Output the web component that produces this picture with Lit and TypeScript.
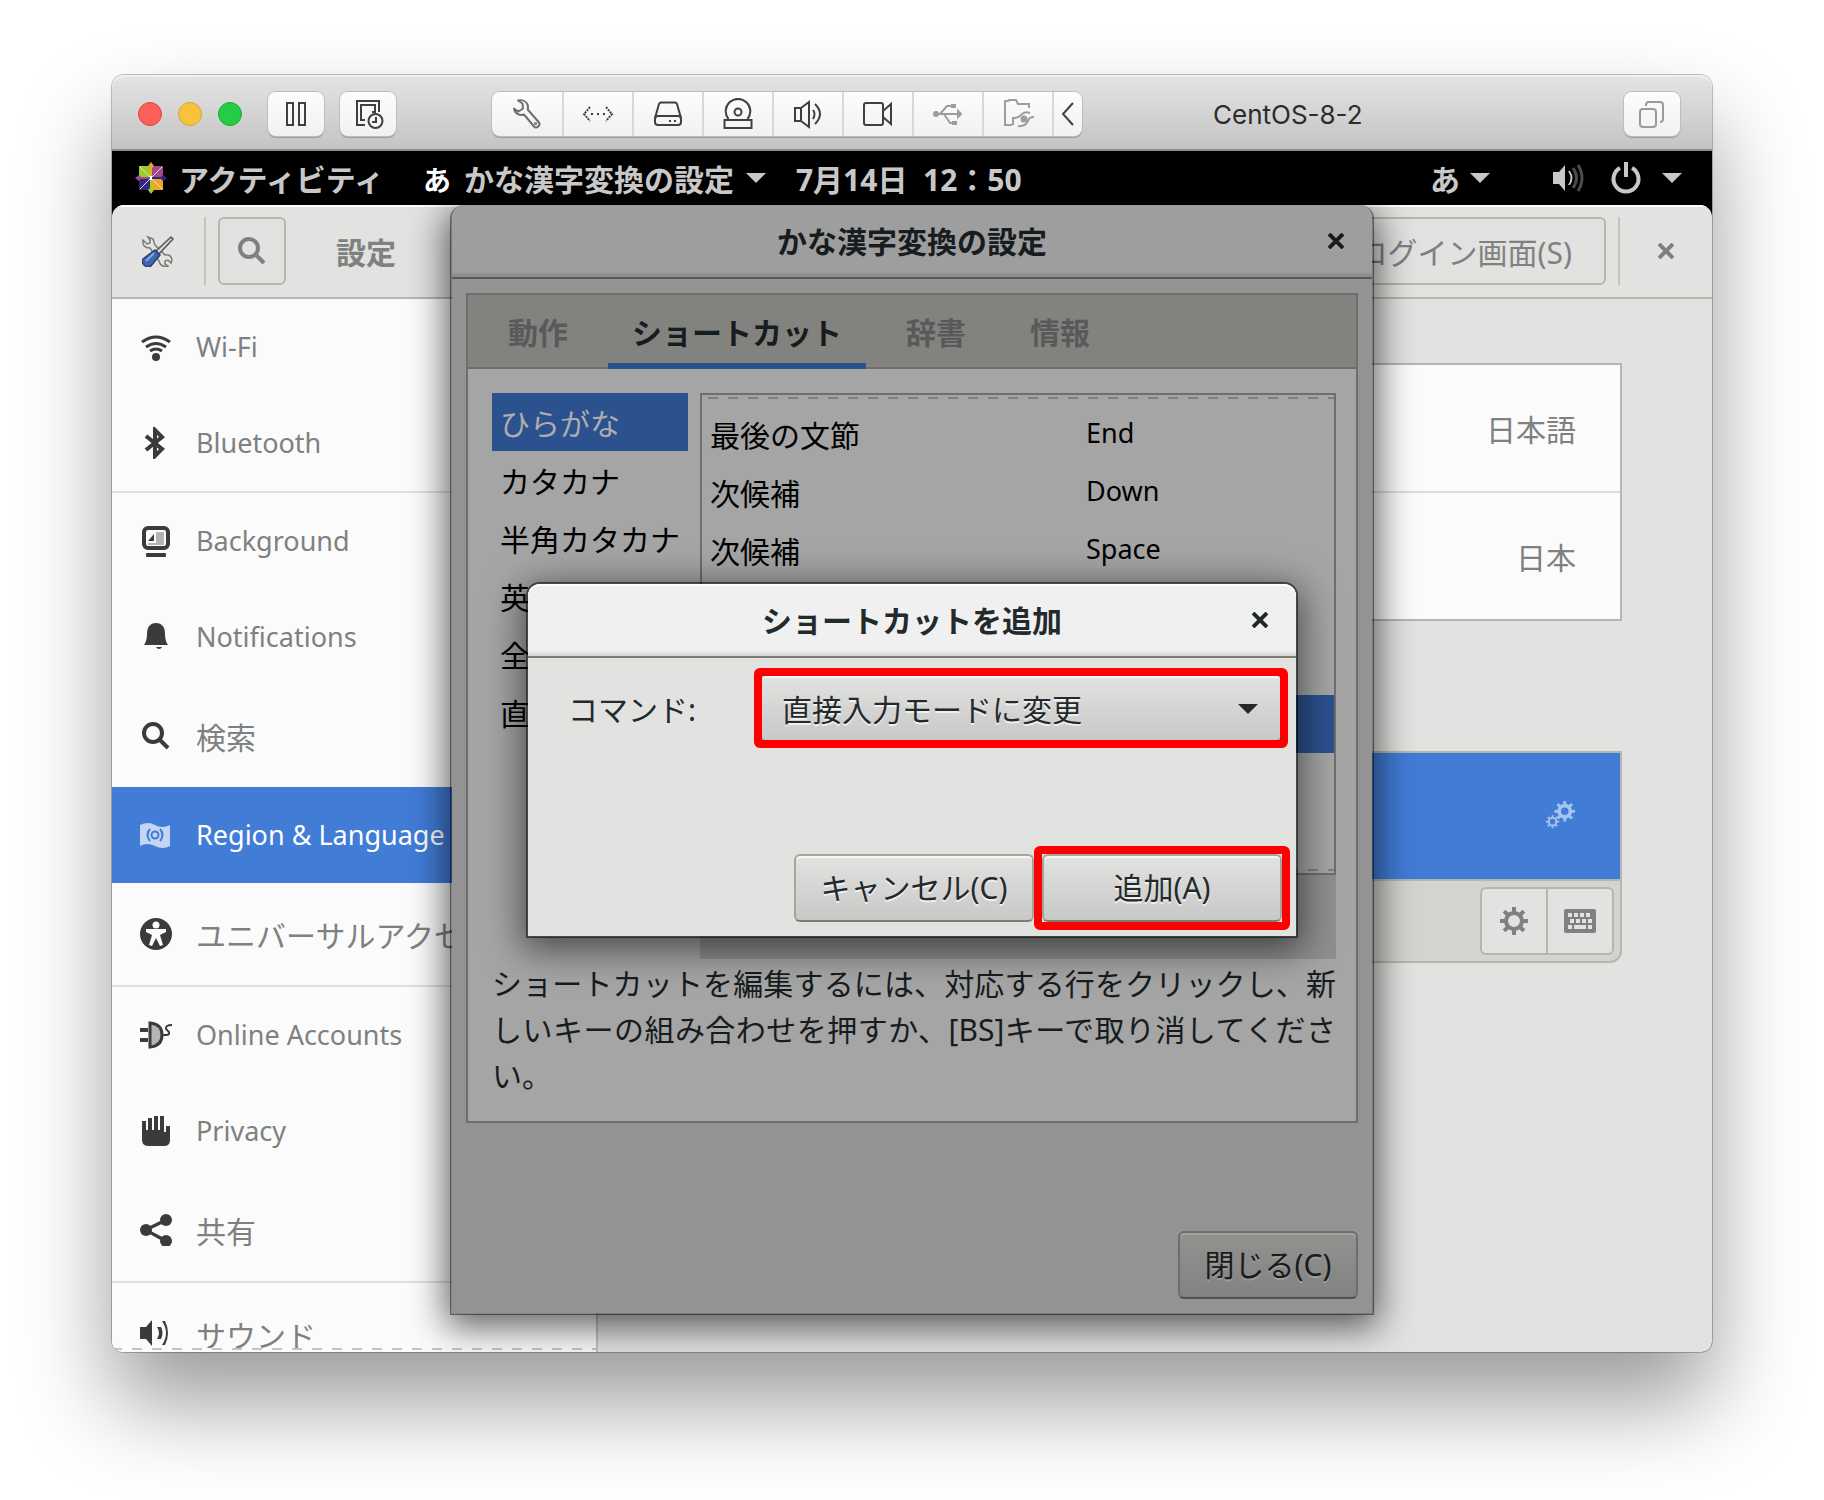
import { LitElement, html, svg, css, nothing, TemplateResult } from "lit";
import { customElement, state } from "lit/decorators.js";
import { classMap } from "lit/directives/class-map.js";

/* Toolbar glyphs of the virtual machine window, on a 32-unit grid. */
const line = (body: unknown, w = 2) =>
  html`<svg class="glyph" viewBox="0 0 32 32" fill="none" stroke="currentColor" stroke-width=${w} aria-hidden="true">${body}</svg>`;
const solid = (body: unknown) =>
  html`<svg class="glyph" viewBox="0 0 32 32" fill="currentColor" aria-hidden="true">${body}</svg>`;

const vm = {
  pause: line(svg`<rect x="7" y="5" width="6" height="22"/><rect x="19" y="5" width="6" height="22"/>`),
  snapshot: line(svg`<path d="M13 27H5V3h22v11M13 22H9V7h14v7h-3"/><circle cx="23.500" cy="23" r="7"/><path d="M24 19v5h-4"/>`),
  wrench: line(svg`<path stroke-linejoin="round" d="M7 2.500c4-1 8 .5 9.500 4 .8 1.800.6 3.500.2 5L28 24.500c2 2.800-2.500 6.500-5 4L13 16.500c-4 1.500-9-.5-10-6l4.500 3 4.500-3-.5-5z"/><circle cx="24.500" cy="25.500" r=".6"/>`),
  network: line(svg`<path stroke-dasharray="2 1" d="M8 9l-6 7 6 7M24 9l6 7-6 7"/><path stroke-dasharray="2 4" d="M9 16h15"/>`),
  disk: line(svg`<path stroke-linejoin="round" d="M3 20L7 6q.6-1.500 2-1.500h14q1.400 0 2 1.500l4 14"/><rect x="3" y="18" width="26" height="9" rx="3"/><path d="M17 23h2M22 23h2"/>`),
  optical: line(svg`<path d="M6.500 21A12.300 12.300 0 1 1 25.500 21"/><circle cx="16" cy="14" r="3.500"/><rect x="2.500" y="22" width="27" height="8"/>`),
  sound: line(svg`<path d="M3 10h6v13H3zM9 10l8-6v25l-8-6M21 12q3 4 0 9M23 6q10 10 0 20"/>`),
  video: line(svg`<rect x="2" y="5" width="19" height="22" rx="2"/><path d="M21 13l8-7v20l-8-7"/>`),
  usb: line(svg`<path d="M2 16h26M8 16l7-8h6M12 16l6 9h4"/><circle cx="4" cy="16" r="2" fill="currentColor"/><path d="M26 13l3 3-3 3zM20 7h3v2h-3zM21 24h3v2h-3z" fill="currentColor"/>`),
  shared: line(svg`<path d="M10 27H3V3h3l1-1h7l2 4h11v4M11 27V20q5 0 8-3 4-4 9-2M32 19q-5 0-6 4-3 6-10 5"/><circle cx="22" cy="21" r="2.500" fill="currentColor"/>`),
  windows: line(svg`<rect x="4" y="11" width="16" height="18" rx="3"/><path d="M10 8V7q0-3 3-3h11q3 0 3 3v14q0 3-3 3"/>`),
};

const side = {
  wifi: line(svg`<path d="M2 11q14-10 28 0M6 16q10-7 20 0M10 20q6-4 12 0" stroke-width="3"/><circle cx="16" cy="26" r="4" fill="currentColor" stroke="none"/>`),
  bluetooth: line(svg`<path d="M6 9l16 13-7 7V3l7 7L6 23" stroke-width="4"/>`),
  background: html`<svg class="glyph" viewBox="0 0 32 32" aria-hidden="true"><rect x="4" y="3" width="24" height="20" rx="4" fill="none" stroke="currentColor" stroke-width="4"/><rect x="16" y="7" width="8" height="12" fill="#b4b4b4"/><path d="M8 16l6-7v7z" fill="currentColor"/><path d="M8 19h16" stroke="#b4b4b4" stroke-width="2"/><rect x="6" y="28" width="20" height="4" rx="1" fill="currentColor"/></svg>`,
  bell: solid(svg`<path d="M16 2c6 0 9 4 9 11q0 7 3 11H4q3-4 3-11c0-7 3-11 9-11zM16 26h6q-1 2-3 2t-3-2z"/>`),
  search: line(svg`<circle cx="13" cy="13" r="9"/><path d="M19 19l9 9"/>`, 4),
  flag: html`<svg class="glyph" viewBox="0 0 32 32" aria-hidden="true"><path d="M0 6q8-4 15 0t15 0v21q-7 4-15 0t-15 0z" fill="currentColor" opacity=".68"/><g fill="none" stroke="#417cd7" stroke-width="2"><circle cx="15" cy="16" r="3.500"/><path d="M10 10q-5 6 0 12M20 10q5 6 0 12"/></g></svg>`,
  access: html`<svg class="glyph" viewBox="0 0 32 32" aria-hidden="true"><circle cx="16" cy="16" r="16" fill="currentColor"/><circle cx="16" cy="7" r="3.500" fill="#fbfbfb"/><path d="M6 11h20v3l-6 3 3 10-3 1-4-8-4 8-3-1 3-10-6-3z" fill="#fbfbfb"/></svg>`,
  accounts: html`<svg class="glyph" viewBox="0 0 32 32" aria-hidden="true"><path d="M10 4q12 1 12 12t-12 12z" fill="#b4b4b4" stroke="currentColor" stroke-width="3"/><path d="M0 11h8M0 21h8" stroke="currentColor" stroke-width="4"/><path d="M22 16h4q4 0 3-3l-3-3q-1-4 6-4" fill="none" stroke="currentColor" stroke-width="2"/></svg>`,
  hand: solid(svg`<path d="M2 6h4v9h2V3h4v12h2V1h4v14h2V1h4v16h2v-6h4v14q0 6-6 6H9q-7 0-7-6z"/>`),
  share: solid(svg`<circle cx="6" cy="16" r="6"/><circle cx="26" cy="6" r="6"/><circle cx="26" cy="27" r="6"/><path d="M6 14L26 4v4L9 16l17 9v4L6 18z"/>`),
  sound: solid(svg`<path d="M0 9h6l6-7v26l-6-7H0zM17 9q4 6 0 12h4q3-6 0-12zM22 3q8 12 0 24h3q6-12 0-24z"/>`),
};

const gearTeeth = (cx: number, cy: number, r: number, w: number) =>
  svg`${[0, 45, 90, 135, 180, 225, 270, 315].map(
    (a) => svg`<rect x=${cx - w / 2} y=${cy - r} width=${w} height=${w * 1.3} transform="rotate(${a} ${cx} ${cy})"/>`)}`;

const gear = html`<svg class="glyph" viewBox="0 0 32 32" fill="currentColor" aria-hidden="true"><circle cx="16" cy="16" r="8" fill="none" stroke="currentColor" stroke-width="4"/>${gearTeeth(16, 16, 14, 4)}</svg>`;
const gears = html`<svg class="glyph" viewBox="0 0 32 32" fill="currentColor" aria-hidden="true"><circle cx="20" cy="11" r="6" fill="none" stroke="currentColor" stroke-width="4"/>${gearTeeth(20, 11, 11, 3)}<circle cx="7" cy="22" r="4" fill="none" stroke="currentColor" stroke-width="2"/>${gearTeeth(7, 22, 7, 2)}</svg>`;
const keyboard = html`<svg class="glyph" viewBox="0 0 32 32" aria-hidden="true"><rect x="0" y="4" width="32" height="24" rx="2" fill="currentColor"/><path d="M4 10h4M10 10h4M16 10h4M22 10h4M6 16h4M12 16h4M18 16h4M24 16h4M4 22h4M10 22h12M24 22h4" stroke="#e2e2e0" stroke-width="4"/></svg>`;
const cross = html`<svg class="cross" viewBox="0 0 16 16" stroke="currentColor" stroke-width="4" aria-hidden="true"><path d="M1 1l14 14M15 1L1 15"/></svg>`;
const caret = html`<svg class="caret" viewBox="0 0 20 10" fill="currentColor" aria-hidden="true"><path d="M0 0h20L10 10z"/></svg>`;
const chevron = html`<svg class="chevron" viewBox="0 0 14 28" fill="none" stroke="currentColor" stroke-width="2" aria-hidden="true"><path d="M12 3L2 14l10 11"/></svg>`;

const centos = html`<svg class="glyph" viewBox="0 0 32 32" aria-hidden="true">
  <rect x="4" y="4" width="11" height="11" fill="#9ccd2a"/><rect x="17" y="4" width="11" height="11" fill="#a3478f"/>
  <rect x="4" y="17" width="11" height="11" fill="#2f2780"/><rect x="17" y="17" width="11" height="11" fill="#efa724"/>
  <path d="M5 5l22 22M27 5L5 27" stroke="#ddd" stroke-width="1"/>
  <path d="M16 0l3 4-2 2v9h-2V6l-2-2z" fill="#efa724"/><path d="M32 16l-4 3-2-2h-9v-2h9l2-2z" fill="#2f2780"/>
  <path d="M16 32l-3-4 2-2v-9h2v9l2 2z" fill="#9ccd2a"/><path d="M0 16l4-3 2 2h9v2H6l-2 2z" fill="#a3478f"/>
  <path d="M15 14h2v4h-2z" fill="#fff"/></svg>`;

const tools = html`<svg class="glyph" viewBox="0 0 32 32" aria-hidden="true">
  <path d="M6 2l5 2 2 6 10 10q6-1 7 5l-1 3-3-3-3 1v3l3 2q-7 2-9-5L8 13Q0 13 1 5l4 4 3-1V5z" fill="#e4e4e0" stroke="#777a76" stroke-width="1.500"/>
  <path d="M29 2l2 2-14 15-3-3z" fill="#d4d4d0" stroke="#55585a" stroke-width="1.500"/>
  <path d="M13 15l5 5-9 11q-4 2-7-1t-1-6z" fill="#3f68b0" stroke="#243f7c" stroke-width="1.500"/><path d="M12 18l-8 8" stroke="#86a6dc" stroke-width="2"/></svg>`;

interface Panel { icon: TemplateResult; label: string; tall?: boolean; rule?: boolean; }

const panels: Panel[] = [
  { icon: side.wifi, label: "Wi-Fi" },
  { icon: side.bluetooth, label: "Bluetooth", rule: true },
  { icon: side.background, label: "Background" },
  { icon: side.bell, label: "Notifications" },
  { icon: side.search, label: "検索", tall: true },
  { icon: side.flag, label: "Region & Language" },
  { icon: side.access, label: "ユニバーサルアクセス", tall: true, rule: true },
  { icon: side.accounts, label: "Online Accounts" },
  { icon: side.hand, label: "Privacy" },
  { icon: side.share, label: "共有", tall: true, rule: true },
  { icon: side.sound, label: "サウンド", tall: true },
];

const base = css`
  * { box-sizing: border-box; }
  button, select { font: inherit; color: inherit; margin: 0; padding: 0; border: 0; background: none; }
  a { color: inherit; text-decoration: none; }
  h1, h2, p, ul, dl, dd { margin: 0; padding: 0; font: inherit; }
  ul { list-style: none; }
  svg { display: block; flex: none; }
  .glyph { width: 32px; height: 32px; }
  .cross { width: 16px; height: 16px; }
  .caret { width: 20px; height: 10px; }
`;

@customElement("vm-titlebar")
export class VmTitlebar extends LitElement {
  static styles = [base, css`
    :host { box-sizing: border-box; display: flex; align-items: center; height: 76px; padding: 4px 32px 0 26px;
      background: linear-gradient(#e4e4e4, #c4c4c4); border-bottom: 2px solid #8c8c8c;
      box-shadow: inset 0 2px 0 #f0f0f0; color: #404040; }
    .lights { display: flex; gap: 16px; margin-right: 26px; }
    .light { width: 24px; height: 24px; border-radius: 50%; border: 1px solid #e0443e; background: #fc605b; }
    .light.min { background: #f7c33c; border-color: #dea334; }
    .light.max { background: #25cc46; border-color: #1dad2b; }
    .tool { display: flex; align-items: center; justify-content: center; width: 56px; height: 44px;
      border-radius: 8px; background: linear-gradient(#fdfdfd, #f1f1f1);
      box-shadow: 0 0 0 1px #bdbdbd, 0 2px 1px #999; }
    .pair { display: flex; gap: 16px; margin-right: 96px; }
    .group { display: flex; height: 44px; border-radius: 8px; background: linear-gradient(#fdfdfd, #f1f1f1);
      box-shadow: 0 0 0 1px #bdbdbd, 0 2px 1px #999; }
    .seg { display: flex; align-items: center; justify-content: center; width: 70px; border-right: 2px solid #d8d8d8; }
    .seg:first-child { width: 72px; }
    .seg.dim { color: #9d9d9d; }
    .seg.mid { color: #6e6e6e; }
    .seg.last { width: 28px; border: 0; }
    .chevron { width: 14px; height: 28px; }
    .name { margin-left: 131px; padding-top: 2px; font: 26px/32px Inter, Roboto, sans-serif; color: #2c2c2c; white-space: nowrap; }
    .end { margin-left: auto; color: #9a9a9a; }
  `];
  render() {
    const segs: [string, TemplateResult, string][] = [
      ["設定", vm.wrench, "mid"], ["ネットワーク", vm.network, ""], ["ハードディスク", vm.disk, ""], ["光学ドライブ", vm.optical, ""],
      ["サウンド", vm.sound, ""], ["カメラ", vm.video, ""], ["USB", vm.usb, "dim"], ["共有フォルダ", vm.shared, "dim"],
    ];
    return html`
      <div class="lights">
        <button class="light" aria-label="閉じる"></button>
        <button class="light min" aria-label="しまう"></button>
        <button class="light max" aria-label="拡大"></button>
      </div>
      <div class="pair">
        <button class="tool" aria-label="一時停止">${vm.pause}</button>
        <button class="tool" aria-label="スナップショット">${vm.snapshot}</button>
      </div>
      <div class="group">
        ${segs.map(([label, icon, tone]) => html`<button class="seg ${tone}" aria-label=${label}>${icon}</button>`)}
        <button class="seg last" aria-label="戻る">${chevron}</button>
      </div>
      <h1 class="name">CentOS-8-2</h1>
      <button class="tool end" aria-label="表示">${vm.windows}</button>`;
  }
}

@customElement("gnome-bar")
export class GnomeBar extends LitElement {
  static styles = [base, css`
    :host { box-sizing: border-box; display: flex; align-items: center; height: 54px; padding: 0 30px 0 23px; background: #000;
      color: #c8c8c8; font-weight: 700; white-space: nowrap; }
    button { display: flex; align-items: center; }
    span { padding-top: 4px; }
    .start { gap: 12px; margin-right: 38px; }
    .app { gap: 12px; margin-right: 30px; }
    .badge { width: 30px; font-size: 28px; color: #fff; }
    .right { margin-left: auto; display: flex; align-items: center; }
    .ime { gap: 10px; margin-right: 62px; }
    .status { gap: 26px; }
    .status .caret { margin-left: -6px; }
  `];
  render() {
    return html`
      <button class="start">${centos}<span>アクティビティ</span></button>
      <button class="app"><span class="badge">あ</span><span>かな漢字変換の設定</span>${caret}</button>
      <button><span>7月14日&nbsp;&nbsp;12：50</span></button>
      <div class="right">
        <button class="ime"><span>あ</span>${caret}</button>
        <button class="status" aria-label="システム">
          <svg class="glyph" viewBox="0 0 32 32" fill="currentColor" aria-hidden="true"><path d="M1 10h6l6-7v26l-6-7H1zM16 9q5 7 0 14h2q5-7 0-14z"/><g fill="none" stroke="#4c4c4c" stroke-width="3"><path d="M21 6q7 10 0 20M26 3q8 13 0 26"/></g></svg>
          <svg class="glyph" viewBox="0 0 32 32" fill="none" stroke="currentColor" stroke-width="4" aria-hidden="true"><path d="M10 6a12.500 12.500 0 1 0 12 0M16 0v15"/></svg>
          ${caret}
        </button>
      </div>`;
  }
}

@customElement("settings-window")
export class SettingsWindow extends LitElement {
  @state() private current = "Region & Language";
  static styles = [base, css`
    :host { display: flex; flex-direction: column; min-height: 0; overflow: hidden; color: #7e8180;
      background: #e2e2e0; border-radius: 12px 12px 0 0; }
    .head { flex: none; display: flex; align-items: center; height: 94px; padding: 0 38px 0 30px;
      border-bottom: 2px solid #b5b5b1; box-shadow: inset 0 2px 0 #fff; }
    .bar { width: 2px; height: 68px; background: #c3c3bf; }
    .bar.first { margin: 0 12px 0 30px; }
    .bar.second { margin: 0 38px 0 12px; }
    .box { display: flex; align-items: center; justify-content: center; height: 68px; min-width: 68px;
      border: 2px solid #b5b5b1; border-radius: 6px; }
    .head h2 { margin-left: 50px; padding-top: 4px; font-weight: 700; }
    .box.login { margin-left: auto; padding: 4px 32px 0; }
    .main { flex: 1; min-height: 0; display: flex; }
    .nav { position: relative; flex: none; width: 486px; overflow: hidden; background: #fbfbfb; border-right: 2px solid #c0c0bc; }
    .nav::after { content: ""; position: absolute; left: 0; right: 0; bottom: 2px; height: 2px;
      background: repeating-linear-gradient(90deg, #c4c4c4 0 10px, #fbfbfb 10px 20px); }
    .item { display: flex; align-items: center; gap: 24px; height: 96px; padding-left: 28px; font-size: 27px; white-space: nowrap; }
    .item.tall { height: 102px; font-size: 30px; }
    .item.tall span { padding-top: 4px; }
    .item .glyph { color: #3b3b3b; }
    .ruled { border-bottom: 2px solid #dededc; }
    .item.on { background: #417cd7; color: #fff; }
    .item.on .glyph { color: #fff; }
    .panel { flex: 1; min-width: 0; padding: 64px 90px 0; }
    .card { border: 2px solid #b5b5b1; background: #fbfbfb; }
    .row { display: flex; align-items: center; justify-content: flex-end; height: 126px; padding: 4px 44px 0 0; }
    .row + .row { height: 128px; border-top: 2px solid #dcdcda; }
    .sources { margin-top: 130px; border-radius: 0 0 12px 12px; background: #d3d3cf; }
    .sources .row { padding-top: 0; background: #417cd7; color: #a6c4ef; }
    .sources .row .glyph { width: 30px; height: 30px; }
    .foot { display: flex; justify-content: flex-end; padding: 6px; border-top: 2px solid #b5b5b1; }
    .foot .box { background: #e2e2e0; }
    .foot .box:first-child { min-width: 66px; border-radius: 6px 0 0 6px; border-right: 0; }
    .foot .box:last-child { border-radius: 0 6px 6px 0; }
  `];
  render() {
    return html`
      <header class="head">
        ${tools}<span class="bar first"></span>
        <button class="box" aria-label="検索">${side.search}</button>
        <h2>設定</h2>
        <button class="box login">ログイン画面(S)</button>
        <span class="bar second"></span>
        <button aria-label="閉じる">${cross}</button>
      </header>
      <div class="main">
        <nav class="nav"><ul>
          ${panels.map((p) => html`<li class=${p.rule ? "ruled" : ""}>
            <a href="#" class=${classMap({ item: true, tall: !!p.tall, on: p.label === this.current })}
              @click=${(e: Event) => { e.preventDefault(); this.current = p.label; }}>${p.icon}<span>${p.label}</span></a></li>`)}
        </ul></nav>
        <section class="panel">
          <div class="card"><div class="row">日本語</div><div class="row">日本</div></div>
          <div class="card sources">
            <div class="row">${gears}</div>
            <div class="foot">
              <button class="box" aria-label="設定">${gear}</button>
              <button class="box" aria-label="キーボード">${keyboard}</button>
            </div>
          </div>
        </section>
      </div>`;
  }
}

const dialogCss = css`
  .dialog { display: flex; flex-direction: column; }
  .title { position: relative; display: flex; align-items: center; justify-content: center; height: 74px;
    font-weight: 700; border-radius: 12px 12px 0 0; }
  .title h2 { padding-top: 2px; }
  .title button { position: absolute; right: 28px; }
`;

@customElement("kana-dialog")
export class KanaDialog extends LitElement {
  @state() private tab = 1;
  @state() private mode = 0;
  static styles = [base, dialogCss, css`
    :host { box-sizing: border-box; display: block; width: 924px; border: 2px solid rgba(0, 0, 0, 0.46); border-top: 0; border-radius: 14px 14px 0 0;
      box-shadow: 0 8px 36px 4px rgba(0, 0, 0, 0.62); background: #939393; background-clip: padding-box; color: #171c1e; }
    .title { background: linear-gradient(#9e9e9e 66px, #8e8e8c 70px); border-bottom: 2px solid #58584f; }
    .content { display: flex; flex-direction: column; padding: 14px; }
    .book { border: 2px solid #6e6e6e; background: #a5a5a5; }
    .tabs { display: flex; gap: 16px; height: 74px; padding: 0 16px; background: #82827f; border-bottom: 2px solid #6e6e6e; }
    .tab { height: 74px; padding: 8px 24px 0; font-weight: 700; color: #585a5a; border-bottom: 6px solid transparent; }
    .tab.on { color: #171c1e; border-color: #2b528f; }
    .page { padding: 24px 20px 22px 24px; }
    .cols { display: flex; align-items: flex-start; gap: 12px; color: #000; }
    .mode { display: block; width: 196px; height: 58px; padding: 4px 0 0 8px; text-align: left; white-space: nowrap; }
    .mode.on { background: #2b528f; color: #adadad; }
    .keys { flex: 1; }
    .frame { border: 2px solid #6e6e6e; padding: 10px 0 4px;
      background:
        repeating-linear-gradient(90deg, transparent 0 6px, #7e7e7e 6px 16px, transparent 16px 20px) 0 2px / 100% 2px no-repeat,
        repeating-linear-gradient(90deg, transparent 0 6px, #7e7e7e 6px 16px, transparent 16px 20px) 0 calc(100% - 2px) / 100% 2px no-repeat; }
    table { width: 100%; border-collapse: collapse; table-layout: fixed; }
    td { height: 58px; padding: 0 8px; }
    td:first-child { width: 376px; padding-top: 4px; }
    td:last-child { font-size: 27px; padding-bottom: 2px; }
    .picked { background: #2b528f; }
    .strip { height: 84px; background: #8f8f8f; }
    .hint { padding-top: 2px; line-height: 46px; text-align: justify; }
    .close { align-self: flex-end; height: 68px; min-width: 180px; margin-top: 108px; border: 2px solid #6e6e6a; border-bottom-color: #53534c;
      border-radius: 6px; background: linear-gradient(#929290, #828280); box-shadow: inset 0 2px 0 #a2a2a0; text-shadow: 0 2px 0 #9c9c9a; }
  `];
  render() {
    const keys = [["最後の文節", "End"], ["次候補", "Down"], ["次候補", "Space"], ["", ""], ["", ""], ["", ""], ["", ""], ["", ""]];
    const modes = ["ひらがな", "カタカナ", "半角カタカナ", "英", "全", "直"];
    return html`<div class="dialog" role="dialog" aria-labelledby="kana-title">
      <header class="title"><h2 id="kana-title">かな漢字変換の設定</h2><button aria-label="閉じる">${cross}</button></header>
      <div class="content">
        <div class="book">
          <div class="tabs" role="tablist">
            ${["動作", "ショートカット", "辞書", "情報"].map((t, i) => html`<button role="tab" aria-selected=${i === this.tab}
              class=${classMap({ tab: true, on: i === this.tab })} @click=${() => (this.tab = i)}>${t}</button>`)}
          </div>
          <div class="page">
            <div class="cols">
              <ul>${modes.map((m, i) => html`<li><button class=${classMap({ mode: true, on: i === this.mode })}
                @click=${() => (this.mode = i)}>${m}</button></li>`)}</ul>
              <div class="keys">
                <div class="frame"><table>
                  ${keys.map(([c, k], i) => html`<tr class=${i === 5 ? "picked" : nothing}><td>${c}</td><td>${k}</td></tr>`)}
                </table></div>
                <div class="strip"></div>
              </div>
            </div>
            <p class="hint">ショートカットを編集するには、対応する行をクリックし、新しいキーの組み合わせを押すか、[BS]キーで取り消してください。</p>
          </div>
        </div>
        <button class="close">閉じる(C)</button>
      </div>
    </div>`;
  }
}

@customElement("add-dialog")
export class AddDialog extends LitElement {
  static styles = [base, dialogCss, css`
    :host { box-sizing: border-box; display: block; width: 772px; border: 2px solid rgba(0, 0, 0, 0.55); border-radius: 14px 14px 0 0;
      background: #e2e2e0; background-clip: padding-box; color: #232a2c; box-shadow: 0 8px 36px 4px rgba(0, 0, 0, 0.55); }
    .title { background: linear-gradient(#f0f0f0 66px, #d4d4d0 72px); border-bottom: 2px solid #7e7e75; box-shadow: inset 0 2px 0 #fff; }
    .body { padding: 16px 14px 14px 40px; }
    .field { display: flex; align-items: center; justify-content: space-between; }
    label { padding-top: 4px; }
    .pick { position: relative; width: 522px; }
    .pick select, .push { width: 100%; height: 68px; border: 2px solid #a5a5a0; border-bottom-color: #7e7e75; border-radius: 6px;
      background: linear-gradient(#e2e2e0, #c8c8c6); box-shadow: inset 0 2px 0 #f6f6f6; text-shadow: 0 2px 0 #f0f0f0; }
    .pick select { display: block; appearance: none; padding: 4px 60px 0 20px; }
    .pick .caret { position: absolute; right: 24px; top: 30px; pointer-events: none; }
    .mark::after { content: ""; position: absolute; inset: -6px; border: 8px solid #f00; border-radius: 6px; pointer-events: none; }
    .acts { display: grid; grid-template-columns: 1fr 1fr; gap: 8px; margin-top: 112px; margin-left: 226px; }
    .act { position: relative; }
    .act.mark::after { inset: -8px; }
  `];
  render() {
    return html`<div class="dialog" role="dialog" aria-labelledby="add-title">
      <header class="title"><h2 id="add-title">ショートカットを追加</h2><button aria-label="閉じる">${cross}</button></header>
      <div class="body">
        <div class="field">
          <label for="command">コマンド:</label>
          <div class="pick mark"><select id="command"><option>直接入力モードに変更</option></select>${caret}</div>
        </div>
        <div class="acts">
          <div class="act"><button class="push">キャンセル(C)</button></div>
          <div class="act mark"><button class="push">追加(A)</button></div>
        </div>
      </div>
    </div>`;
  }
}

@customElement("app-root")
export class AppRoot extends LitElement {
  static styles = [base, css`
    :host { display: flex; height: 100vh; box-sizing: border-box; padding: 75px 112px 148px; background: #fff; overflow: hidden;
      font: 30px/44px "Noto Sans", "Noto Sans CJK JP", sans-serif; }
    .window { flex: 1; min-width: 0; display: flex; flex-direction: column; border-radius: 12px;
      box-shadow: 0 0 0 1px rgba(0, 0, 0, 0.24), 0 50px 90px rgba(0, 0, 0, 0.4); }
    vm-titlebar { flex: none; border-radius: 12px 12px 0 0; }
    .screen { position: relative; flex: 1; min-height: 0; display: flex; flex-direction: column; overflow: hidden;
      border-radius: 0 0 10px 10px; background: #000; }
    gnome-bar { flex: none; }
    settings-window { flex: 1; }
    .modals { position: absolute; inset: 54px 0 0; display: grid; justify-items: center; align-items: start; overflow: hidden; }
    .stack { display: grid; place-items: center; }
    .stack > * { grid-area: 1 / 1; }
  `];
  render() {
    return html`<main class="window">
      <vm-titlebar></vm-titlebar>
      <div class="screen">
        <gnome-bar></gnome-bar>
        <settings-window></settings-window>
        <div class="modals"><div class="stack"><kana-dialog></kana-dialog><add-dialog></add-dialog></div></div>
      </div>
    </main>`;
  }
}
